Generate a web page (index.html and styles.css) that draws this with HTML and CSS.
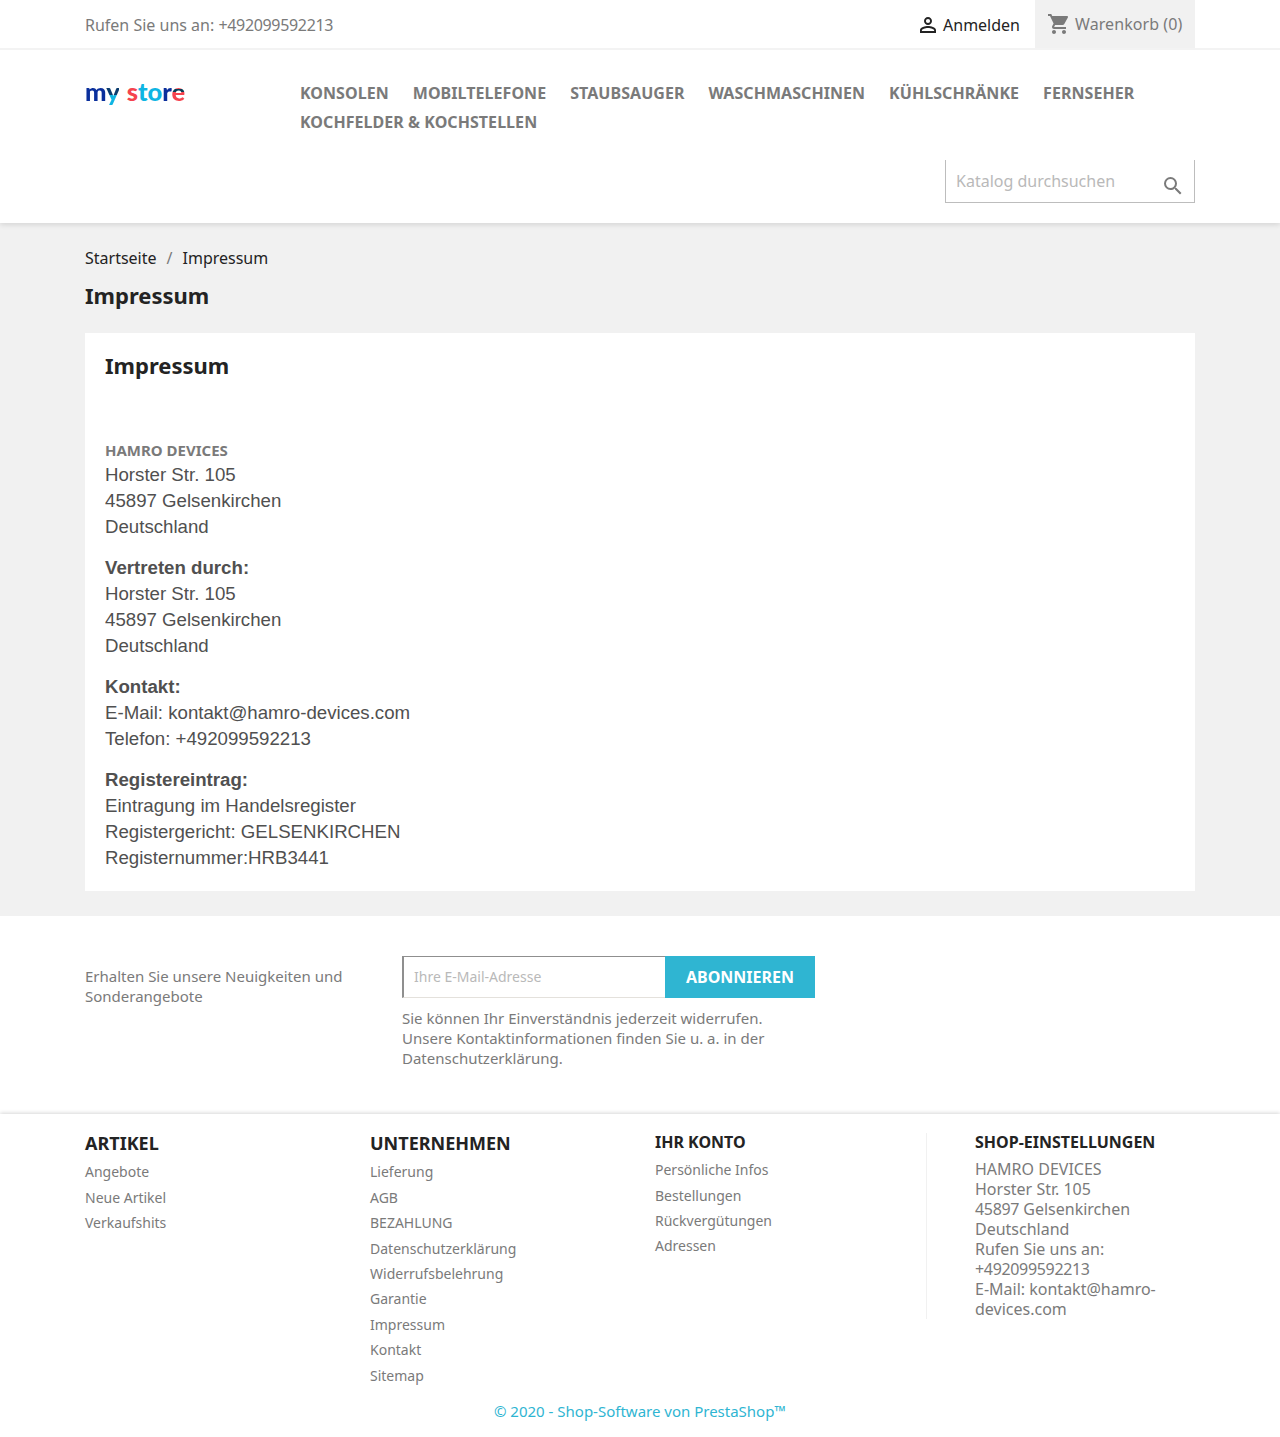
FILE: index.html
```html
<!DOCTYPE html>
<html lang="de">
<head>
<meta charset="utf-8">
<title>Impressum</title>
<link rel="stylesheet" href="styles.css">
</head>
<body>
<header class="site-header">
  <div class="topbar">
    <div class="wrap topbar-inner">
      <span class="phone">Rufen Sie uns an: <span class="num">+492099592213</span></span>
      <div class="topbar-right">
        <a class="signin">
          <svg class="icon-user" viewBox="0 0 24 24" width="24" height="24"><path fill="#232323" d="M12 5.9a2.1 2.1 0 1 1 0 4.2 2.1 2.1 0 0 1 0-4.2m0 9c2.97 0 6.1 1.46 6.1 2.1v1.1H5.9V17c0-.64 3.13-2.1 6.1-2.1M12 4C9.79 4 8 5.79 8 8s1.79 4 4 4 4-1.79 4-4-1.79-4-4-4zm0 9c-2.67 0-8 1.34-8 4v3h16v-3c0-2.66-5.33-4-8-4z"/></svg>
          <span>Anmelden</span>
        </a>
        <a class="cart">
          <svg class="icon-cart" viewBox="0 0 24 24" width="24" height="24"><path fill="#7a7a7a" d="M7 18c-1.1 0-1.99.9-1.99 2S5.9 22 7 22s2-.9 2-2-.9-2-2-2zM1 2v2h2l3.6 7.59-1.35 2.45c-.16.28-.25.61-.25.96 0 1.1.9 2 2 2h12v-2H7.42c-.14 0-.25-.11-.25-.25l.03-.12.9-1.63h7.45c.75 0 1.41-.41 1.75-1.03l3.58-6.49c.08-.14.12-.31.12-.48 0-.55-.45-1-1-1H5.21l-.94-2H1zm16 16c-1.1 0-1.99.9-1.99 2s.89 2 1.99 2 2-.9 2-2-.9-2-2-2z"/></svg>
          <span>Warenkorb (0)</span>
        </a>
      </div>
    </div>
  </div>
  <div class="wrap masthead">
    <a class="logo"><span class="l-m">m</span><span class="l-y">y</span> <span class="l-s">s</span><span class="l-t">t</span><span class="l-o">o</span><span class="l-r">r</span><span class="l-e">e</span></a>
    <nav class="menu">
      <a>Konsolen</a><a>Mobiltelefone</a><a>Staubsauger</a><a>Waschmaschinen</a><a>Kühlschränke</a><a>Fernseher</a><a>Kochfelder &amp; Kochstellen</a>
    </nav>
  </div>
  <div class="wrap search-row">
    <form class="search">
      <input class="search-input" type="text" placeholder="Katalog durchsuchen">
      <svg class="icon-search" viewBox="0 0 24 24" width="24" height="24"><path fill="#7a7a7a" d="M15.5 14h-.79l-.28-.27A6.47 6.47 0 0 0 16 9.5 6.5 6.5 0 1 0 9.5 16c1.61 0 3.09-.59 4.23-1.57l.27.28v.79l5 4.99L20.49 19l-4.99-5zm-6 0C7.01 14 5 11.99 5 9.5S7.01 5 9.5 5 14 7.01 14 9.5 11.99 14 9.5 14z"/></svg>
    </form>
  </div>
</header>

<main class="content-area">
  <div class="wrap">
    <ol class="breadcrumb">
      <li>Startseite</li>
      <li class="sep">/</li>
      <li>Impressum</li>
    </ol>
    <h1 class="page-title">Impressum</h1>
    <section class="card">
      <h2 class="card-title">Impressum</h2>
      <div class="legal">
        <h3 class="company">HAMRO DEVICES</h3>
        <p>Horster Str. 105<br>45897 Gelsenkirchen<br>Deutschland</p>
        <p><strong>Vertreten durch:</strong><br>Horster Str. 105<br>45897 Gelsenkirchen<br>Deutschland</p>
        <p><strong>Kontakt:</strong><br>E-Mail: kontakt@hamro-devices.com<br>Telefon: +492099592213</p>
        <p><strong>Registereintrag:</strong><br>Eintragung im Handelsregister<br>Registergericht: GELSENKIRCHEN<br>Registernummer:HRB3441</p>
      </div>
    </section>
  </div>
</main>

<section class="newsletter">
  <div class="wrap newsletter-inner">
    <p class="news-lead">Erhalten Sie unsere Neuigkeiten und Sonderangebote</p>
    <div class="news-form">
      <form class="news-row">
        <input class="news-input" type="text" placeholder="Ihre E-Mail-Adresse">
        <button class="news-btn" type="button">ABONNIEREN</button>
      </form>
      <p class="news-note">Sie können Ihr Einverständnis jederzeit widerrufen. Unsere Kontaktinformationen finden Sie u. a. in der Datenschutzerklärung.</p>
    </div>
  </div>
</section>

<footer class="site-footer">
  <div class="wrap footer-grid">
    <div class="fcol">
      <h4 class="fhead">ARTIKEL</h4>
      <ul class="flinks"><li>Angebote</li><li>Neue Artikel</li><li>Verkaufshits</li></ul>
    </div>
    <div class="fcol">
      <h4 class="fhead">UNTERNEHMEN</h4>
      <ul class="flinks"><li>Lieferung</li><li>AGB</li><li>BEZAHLUNG</li><li>Datenschutzerklärung</li><li>Widerrufsbelehrung</li><li>Garantie</li><li>Impressum</li><li>Kontakt</li><li>Sitemap</li></ul>
    </div>
    <div class="fcol account">
      <h4 class="fhead small">IHR KONTO</h4>
      <ul class="flinks"><li>Persönliche Infos</li><li>Bestellungen</li><li>Rückvergütungen</li><li>Adressen</li></ul>
    </div>
    <div class="fcol shop">
      <h4 class="fhead small">SHOP-EINSTELLUNGEN</h4>
      <p class="shop-text">HAMRO DEVICES<br>Horster Str. 105<br><span class="num">45897</span> Gelsenkirchen<br>Deutschland<br>Rufen Sie uns an:<br><span class="num">+492099592213</span><br>E-Mail: kontakt@hamro-devices.com</p>
    </div>
  </div>
  <p class="copyright">© 2020 - Shop-Software von PrestaShop™</p>
</footer>
</body>
</html>
```
FILE: styles.css
```css
* { box-sizing: border-box; }
html, body { margin: 0; padding: 0; }
body {
  font-family: "Noto Sans", sans-serif;
  font-size: 16px;
  color: #7a7a7a;
  background: #fff;
}
.wrap { width: 1110px; margin: 0 auto; }
.num { letter-spacing: -.33px; }

/* header */
.site-header { height: 223px; background: #fff; box-shadow: 0 2px 5px rgba(0,0,0,.11); position: relative; }
.topbar { height: 50px; border-bottom: 2px solid #f3f3f3; }
.topbar-inner { display: flex; justify-content: space-between; align-items: stretch; height: 48px; }
.phone { line-height: 51px; }
.topbar-right { display: flex; height: 48px; }
.signin { display: flex; align-items: center; gap: 3px; color: #232323; padding-right: 15px; padding-top: 2px; }
.icon-user { width: 24px; height: 24px; }
.cart { display: flex; align-items: center; gap: 3px; width: 160px; padding-left: 12px; background: #f1f1f1; letter-spacing: .08px; }
.cart span { margin-left: 1px; }
.masthead { display: flex; padding-top: 29px; height: 110px; }
.logo { width: 215px; margin-top: -3px; height: 30px; font-family: "Lato", sans-serif; font-weight: 900; font-size: 25.5px; line-height: 30px; word-spacing: 1.5px; white-space: nowrap; }
.l-m { background: linear-gradient(#c42fb0 38%, #0a2f9c 38%); -webkit-background-clip: text; background-clip: text; color: transparent; }
.l-y { background: linear-gradient(#0b3c6e 62%, #0fb5e3 62%); -webkit-background-clip: text; background-clip: text; color: transparent; }
.l-s { color: #f5434e; }
.l-t { color: #0fb5e3; }
.l-o { color: #0fb5e3; }
.l-r { background: linear-gradient(#c42fb0 38%, #0a2f9c 38%); -webkit-background-clip: text; background-clip: text; color: transparent; }
.l-e { background: linear-gradient(#f5434e 44%, #0b3c55 44%, #0b3c55 54%, #f5434e 54%); -webkit-background-clip: text; background-clip: text; color: transparent; }
.menu { width: 880px; display: flex; flex-wrap: wrap; align-content: flex-start; column-gap: 24px; font-size: 16px; letter-spacing: .05px; font-weight: 700; line-height: 29px; text-transform: uppercase; }
.search-row { display: flex; justify-content: flex-end; }
.search { position: relative; width: 250px; height: 43px; border: 1px solid #bdbdbd; border-top: 0; background: #fff; }
.search-input { width: 100%; height: 41px; border: 0; outline: 0; padding: 0 40px 0 10px; font: 16px "Noto Sans", sans-serif; background: transparent; }
.search-input::placeholder { color: #b9b9b9; opacity: 1; }
.icon-search { position: absolute; right: 9px; top: 14px; }

/* main */
.content-area { height: 693px; background: #f1f1f1; padding-top: 24px; }
.breadcrumb { list-style: none; display: flex; margin: 0; padding: 0; height: 22px; line-height: 22px; color: #232323; gap: 10px; }
.breadcrumb .sep { color: #7a7a7a; }
.page-title { margin: 11px 0 0; font-size: 22px; line-height: 30px; font-weight: 700; color: #232323; }
.card { margin-top: 23px; height: 558px; background: #fff; padding: 19px 20px 0; }
.card-title { margin: -2px 0 0; font-size: 22px; line-height: 30px; font-weight: 700; color: #232323; }
.legal { margin-top: 60px; font-family: "Liberation Sans", Arial, sans-serif; font-size: 18.67px; line-height: 26px; color: #505050; }
.legal p { margin: 0 0 15.1px; }
.company { margin: 0 0 1px; font-family: "Noto Sans", sans-serif; font-size: 15px; line-height: 21px; font-weight: 700; color: #7a7a7a; }

/* newsletter */
.newsletter { height: 198px; padding-top: 40px; background: #fff; }
.newsletter-inner { display: flex; }
.news-lead { width: 317px; margin: 10px 0 0; font-size: 15px; line-height: 20px; padding-right: 30px; }
.news-form { width: 414px; }
.news-row { display: flex; height: 42px; }
.news-input { width: 263px; height: 42px; border: 2px solid #e4e1dc; border-top-color: #8f8f8f; border-left-color: #8f8f8f; border-top-width: 1px; border-bottom-width: 1px; border-right: 0; outline: 0; padding: 0 10px 2px; font: 14px "Noto Sans", sans-serif; background: #fff; }
.news-input::placeholder { color: #b9b9b9; opacity: 1; }
.news-btn { width: 150px; height: 42px; border: 0; background: #2fb5d2; color: #fff; font: 700 16px "Noto Sans", sans-serif; padding: 0; }
.news-note { margin: 10px 0 0; width: 380px; font-size: 15px; line-height: 20px; }

/* footer */
.site-footer { height: 323px; background: #fff; box-shadow: 0 -1px 4px rgba(0,0,0,.16); padding-top: 17px; position: relative; }
.footer-grid { display: flex; height: 270px; }
.fcol { width: 285px; }
.fcol.shop { width: 269px; height: 186px; margin-top: 2px; padding-left: 48px; border-left: 1px solid #f1f1f1; }
.fcol.shop .fhead { margin-top: -1px; }
.fcol.account { width: 271px; padding-top: 1px; }
.fhead { margin: 0; font-size: 18px; line-height: 24px; font-weight: 700; color: #232323; }
.fhead.small { font-size: 16px; line-height: 20px; }
.flinks { list-style: none; margin: 4.3px 0 0; padding: 0; font-size: 14px; line-height: 25.4px; }
.account .flinks { margin-top: 5.2px; }
.shop-text { margin: 7px 0 0; font-size: 16px; line-height: 20px; }
.copyright { margin: 0; text-align: center; font-size: 15px; line-height: 20px; color: #2fb5d2; }
```
